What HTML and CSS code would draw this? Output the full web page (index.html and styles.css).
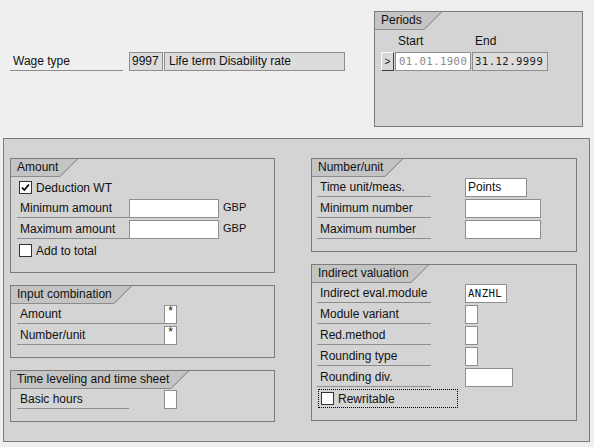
FILE: index.html
```html
<!DOCTYPE html>
<html>
<head>
<meta charset="utf-8">
<link rel="stylesheet" href="styles.css">
</head>
<body>
<div class="top">
  <div class="wage">
    <div class="lbl lbl-wage">Wage type</div>
    <div class="fld disp w-code">9997</div>
    <div class="fld disp w-text">Life term Disability rate</div>
  </div>
  <div class="group periods">
    <div class="tab"><span class="tab-text">Periods</span><svg class="tab-edge" width="18" height="18" viewBox="0 0 18 18"><polygon points="0,0 18,0 0,18" fill="#c4c4c4"/><line x1="17.5" y1="0" x2="0" y2="17.5" stroke="#7b7b7b" stroke-width="1"/></svg></div>
    <div class="per-head"><span class="ph-start">Start</span><span>End</span></div>
    <div class="per-row">
      <div class="btn">&gt;</div>
      <div class="fld mono date-start">01.01.1900</div>
      <div class="fld disp mono date-end">31.12.9999</div>
    </div>
  </div>
</div>

<div class="panel">
  <div class="col">
    <div class="group">
      <div class="tab"><span class="tab-text">Amount</span><svg class="tab-edge" width="18" height="18" viewBox="0 0 18 18"><polygon points="0,0 18,0 0,18" fill="#c4c4c4"/><line x1="17.5" y1="0" x2="0" y2="17.5" stroke="#7b7b7b"/></svg></div>
      <div class="rows">
        <div class="row"><span class="cb checked"><svg width="11" height="11" viewBox="0 0 11 11"><path d="M2 5.5 L4.3 8 L9 2.5" fill="none" stroke="#000" stroke-width="1.7"/></svg></span><span class="cb-text">Deduction WT</span></div>
        <div class="row"><div class="lbl w112">Minimum amount</div><div class="fld in-amt"></div><span class="unit">GBP</span></div>
        <div class="row"><div class="lbl w112">Maximum amount</div><div class="fld in-amt"></div><span class="unit">GBP</span></div>
        <div class="row"><span class="cb"></span><span class="cb-text">Add to total</span></div>
      </div>
    </div>
    <div class="group">
      <div class="tab"><span class="tab-text">Input combination</span><svg class="tab-edge" width="18" height="18" viewBox="0 0 18 18"><polygon points="0,0 18,0 0,18" fill="#c4c4c4"/><line x1="17.5" y1="0" x2="0" y2="17.5" stroke="#7b7b7b"/></svg></div>
      <div class="rows">
        <div class="row"><div class="lbl w147">Amount</div><div class="fld in-tiny">*</div></div>
        <div class="row"><div class="lbl w147">Number/unit</div><div class="fld in-tiny">*</div></div>
      </div>
    </div>
    <div class="group">
      <div class="tab"><span class="tab-text">Time leveling and time sheet</span><svg class="tab-edge" width="18" height="18" viewBox="0 0 18 18"><polygon points="0,0 18,0 0,18" fill="#c4c4c4"/><line x1="17.5" y1="0" x2="0" y2="17.5" stroke="#7b7b7b"/></svg></div>
      <div class="rows">
        <div class="row"><div class="lbl w112">Basic hours</div><div class="fld in-tiny gap35"></div></div>
      </div>
    </div>
  </div>

  <div class="col">
    <div class="group right">
      <div class="tab"><span class="tab-text">Number/unit</span><svg class="tab-edge" width="18" height="18" viewBox="0 0 18 18"><polygon points="0,0 18,0 0,18" fill="#c4c4c4"/><line x1="17.5" y1="0" x2="0" y2="17.5" stroke="#7b7b7b"/></svg></div>
      <div class="rows">
        <div class="row"><div class="lbl w114">Time unit/meas.</div><div class="fld rf w62">Points</div></div>
        <div class="row"><div class="lbl w114">Minimum number</div><div class="fld rf w76"></div></div>
        <div class="row"><div class="lbl w114">Maximum number</div><div class="fld rf w76"></div></div>
      </div>
    </div>
    <div class="group right">
      <div class="tab"><span class="tab-text">Indirect valuation</span><svg class="tab-edge" width="18" height="18" viewBox="0 0 18 18"><polygon points="0,0 18,0 0,18" fill="#c4c4c4"/><line x1="17.5" y1="0" x2="0" y2="17.5" stroke="#7b7b7b"/></svg></div>
      <div class="rows">
        <div class="row"><div class="lbl w114">Indirect eval.module</div><div class="fld rf w42 mono">ANZHL</div></div>
        <div class="row"><div class="lbl w114">Module variant</div><div class="fld rf w13"></div></div>
        <div class="row"><div class="lbl w114">Red.method</div><div class="fld rf w13"></div></div>
        <div class="row"><div class="lbl w114">Rounding type</div><div class="fld rf w13"></div></div>
        <div class="row"><div class="lbl w114">Rounding div.</div><div class="fld rf w48"></div></div>
        <div class="row"><div class="focus"><span class="cb"></span><span class="cb-text">Rewritable</span></div></div>
      </div>
    </div>
  </div>
</div>
</body>
</html>
```

FILE: styles.css
```css
html, body {
  margin: 0;
  padding: 0;
}
body {
  background: #efefef;
  font-family: "Liberation Sans", Arial, sans-serif;
  font-size: 12px;
  color: #111;
  width: 594px;
  height: 447px;
  overflow: hidden;
}

.top {
  display: flex;
  align-items: flex-start;
  height: 138px;
  box-sizing: border-box;
  padding-top: 11px;
}
.wage {
  display: flex;
  align-items: flex-start;
  margin-left: 10px;
  margin-top: 41px;
}
.lbl {
  height: 19px;
  box-sizing: border-box;
  border-bottom: 1px solid #8e8e8e;
  padding-left: 3px;
  line-height: 18px;
  white-space: nowrap;
}
.lbl-wage { width: 113px; }

.fld {
  height: 19px;
  box-sizing: border-box;
  border: 1px solid #8e8e8e;
  background: #fff;
  line-height: 17px;
  padding-left: 2px;
  white-space: nowrap;
  overflow: hidden;
}
.disp {
  background: #dcdcdc;
}
.w-code { width: 34px; margin-left: 6px; }
.w-text { width: 181px; margin-left: 1px; padding-left: 4px; }

.mono {
  font-family: "DejaVu Sans Mono", "Liberation Mono", monospace;
  font-size: 10.6px;
  letter-spacing: 0.45px;
}

.group {
  border: 1px solid #7b7b7b;
  background: #d4d4d4;
  box-sizing: border-box;
  padding-bottom: 12px;
}
.periods {
  margin-left: 29px;
  width: 209px;
  height: 116px;
}
.tab {
  display: flex;
  height: 18px;
}
.tab-text {
  background: #c4c4c4;
  height: 18px;
  box-sizing: border-box;
  border-bottom: 1px solid #8c8c8c;
  line-height: 17px;
  padding-left: 6px;
  padding-right: 2px;
  white-space: nowrap;
}
.tab-edge {
  display: block;
}

.per-head {
  display: flex;
  height: 19px;
  line-height: 19px;
  margin-top: 2px;
  padding-left: 23px;
}
.ph-start { width: 77px; }
.per-row {
  display: flex;
  margin-top: 1px;
  padding-left: 6px;
}
.btn {
  width: 13px;
  height: 19px;
  box-sizing: border-box;
  border: 1px solid;
  border-color: #fafafa #404040 #404040 #fafafa;
  background: #d8d8d8;
  font-size: 10px;
  line-height: 17px;
  text-align: center;
}
.date-start {
  width: 76px;
  margin-left: 1px;
  color: #8a8a8a;
  padding-left: 3px;
}
.date-end {
  width: 76px;
  margin-left: 1px;
  color: #222;
  padding-left: 2px;
}

.panel {
  margin-left: 3px;
  width: 587px;
  height: 304px;
  box-sizing: border-box;
  border: 1px solid #7b7b7b;
  background: #d4d4d4;
  padding: 19px 0 0 6px;
  display: grid;
  grid-template-columns: 265px 266px;
  column-gap: 36px;
  align-items: start;
}
.col {
  display: flex;
  flex-direction: column;
  gap: 12px;
}
.col .group {
  padding-left: 6px;
}
.col .group .tab {
  margin-left: -6px;
}
.col .group.right {
  padding-left: 5px;
}
.col .group.right .tab {
  margin-left: -5px;
}
.rows {
  display: flex;
  flex-direction: column;
  gap: 2px;
  margin-top: 1px;
}
.row {
  display: flex;
  align-items: center;
  height: 19px;
}
.cb {
  width: 13px;
  height: 13px;
  box-sizing: border-box;
  border: 1px solid #333;
  background: #fff;
  margin-left: 2px;
  display: flex;
  align-items: center;
  justify-content: center;
}
.cb svg { display: block; }
.cb-text {
  margin-left: 4px;
  white-space: nowrap;
}
.w112 { width: 112px; }
.w147 { width: 147px; }
.w114 { width: 114px; }
.in-amt { width: 90px; margin-left: 0; align-self: flex-start; }
.unit { margin-left: 4px; font-size: 11px; align-self: flex-start; line-height: 17px; }
.in-tiny {
  width: 13px;
  padding: 0;
  text-align: center;
  line-height: 11px;
}
.gap35 { margin-left: 35px; }
.rf { margin-left: 34px; }
.w62 { width: 62px; }
.w76 { width: 76px; }
.w42 { width: 42px; }
.w13 { width: 13px; }
.w48 { width: 48px; }
.focus {
  display: flex;
  align-items: center;
  margin-left: 1px;
  width: 140px;
  height: 19px;
  box-sizing: border-box;
  border: 1px dotted #000;
  padding-left: 0;
}
```
